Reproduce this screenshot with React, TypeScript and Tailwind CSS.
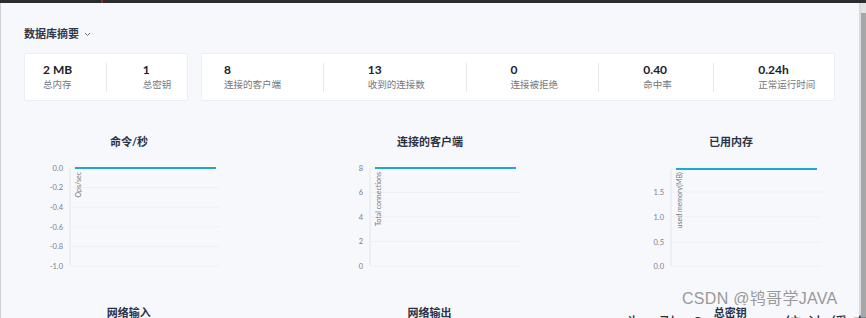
import React from "react";

const FONT = "font-['Lato','Noto_Sans_CJK_SC',sans-serif]";

type Stat = { value: string; label: string; w: string; pl: string };

const memStats: Stat[] = [
  { value: "2 MB", label: "总内存", w: "w-[82px]", pl: "pl-[18px]" },
  { value: "1", label: "总密钥", w: "w-[82px]", pl: "pl-[36px]" },
];

const connStats: Stat[] = [
  { value: "8", label: "连接的客户端", w: "w-[121px]", pl: "pl-[22px]" },
  { value: "13", label: "收到的连接数", w: "w-[143px]", pl: "pl-[44px]" },
  { value: "0", label: "连接被拒绝", w: "w-[133px]", pl: "pl-[44px]" },
  { value: "0.40", label: "命中率", w: "w-[115px]", pl: "pl-[44px]" },
  { value: "0.24h", label: "正常运行时间", w: "w-[121px]", pl: "pl-[44px]" },
];

function StatCard({ stats, width }: { stats: Stat[]; width: string }) {
  return (
    <div
      className={`${width} h-[48px] bg-white border border-[#eceef2] rounded-[2px] flex items-center`}
    >
      {stats.map((s, i) => (
        <div
          key={s.label}
          className={`${s.w} ${s.pl} h-[29px] flex flex-col justify-center ${
            i > 0 ? "border-l border-[#e6e8ec]" : ""
          }`}
        >
          <div className="text-[12px] leading-[14px] font-bold text-[#1d2129]">
            {s.value}
          </div>
          <div className="mt-[2px] text-[9.5px] leading-[12px] text-[#73777e]">
            {s.label}
          </div>
        </div>
      ))}
    </div>
  );
}

type ChartProps = {
  title: string;
  ticks: { label: string; y: number }[];
  axisX: number;
  labelRight: number;
  gridRight: number;
  lineFrom: number;
  lineTo: number;
  lineY: number;
  axisTop: number;
  yLabel: string;
  yLabelX: number;
};

function LineChart(p: ChartProps) {
  return (
    <div className="w-[210px] flex flex-col">
      <div className="h-[16px] text-center text-[11px] leading-[16px] font-bold text-[#2a3346]">
        {p.title}
      </div>
      <svg width="210" height="124" className="block">
        {p.ticks.map((t) => (
          <g key={t.label}>
            <line
              x1={p.axisX}
              x2={p.gridRight}
              y1={t.y}
              y2={t.y}
              stroke="#eef0f4"
              strokeWidth="1"
            />
            <text
              x={p.labelRight}
              y={t.y + 2.8}
              textAnchor="end"
              fontSize="7.5"
              fill="#7b7f87"
              fontFamily="Lato, sans-serif"
            >
              {t.label}
            </text>
          </g>
        ))}
        <line
          x1={p.axisX}
          x2={p.axisX}
          y1={p.axisTop}
          y2={116}
          stroke="#e4e6ea"
          strokeWidth="1"
        />
        <line
          x1={p.lineFrom}
          x2={p.lineTo}
          y1={p.lineY}
          y2={p.lineY}
          stroke="#22a6d8"
          strokeWidth="2"
        />
        <text
          transform={`translate(${p.yLabelX},22) rotate(-90)`}
          textAnchor="end"
          fontSize="7"
          fill="#73777e"
          fontFamily="Lato, sans-serif"
        >
          {p.yLabel}
        </text>
      </svg>
    </div>
  );
}

function ChartTitle({ title }: { title: string }) {
  return (
    <div className="w-[210px] h-[16px] flex justify-center relative z-10">
      <span className="px-[2px] bg-[#f7f8fc] text-[11px] leading-[16px] font-bold text-[#2a3346]">
        {title}
      </span>
    </div>
  );
}

export default function App() {
  return (
    <div className={`relative w-[866px] h-[318px] overflow-hidden bg-[#2d2d2d] ${FONT}`}>
      <div className="h-[3px] relative">
        <div className="absolute left-[101px] top-0 w-[2px] h-[3px] bg-[#8a2a2a]" />
      </div>
      <div className="flex h-[315px]">
        <div className="w-[1px] bg-[#cfd2d6]" />
        <div className="w-[858px] bg-[#f7f8fc] pl-[23px] pr-[24px] pt-[23px]">
          <div className="flex items-center h-[16px] gap-[5px]">
            <span className="text-[11px] font-bold text-[#303a4e]">数据库摘要</span>
            <svg width="7" height="5" viewBox="0 0 7 5" className="mt-[1px]">
              <path d="M1 1 L3.5 3.5 L6 1" fill="none" stroke="#6b6f76" strokeWidth="1" />
            </svg>
          </div>
          <div className="mt-[11px] flex gap-[13px]">
            <StatCard stats={memStats} width="w-[164px]" />
            <StatCard stats={connStats} width="w-[634px]" />
          </div>

          <div className="mt-[33px] flex gap-[91px]">
            <LineChart
              title="命令/秒"
              ticks={[
                { label: "0.0", y: 18 },
                { label: "-0.2", y: 37.6 },
                { label: "-0.4", y: 57.2 },
                { label: "-0.6", y: 76.8 },
                { label: "-0.8", y: 96.4 },
                { label: "-1.0", y: 116 },
              ]}
              axisX={46}
              labelRight={39}
              gridRight={196}
              lineFrom={51}
              lineTo={192}
              lineY={18}
              axisTop={18}
              yLabel="Ops/sec"
              yLabelX={57}
            />
            <LineChart
              title="连接的客户端"
              ticks={[
                { label: "8", y: 18 },
                { label: "6", y: 42.5 },
                { label: "4", y: 67 },
                { label: "2", y: 91.5 },
                { label: "0", y: 116 },
              ]}
              axisX={45}
              labelRight={38}
              gridRight={195}
              lineFrom={50}
              lineTo={191}
              lineY={18}
              axisTop={18}
              yLabel="Total connections"
              yLabelX={56}
            />
            <LineChart
              title="已用内存"
              ticks={[
                { label: "1.5", y: 42 },
                { label: "1.0", y: 67 },
                { label: "0.5", y: 92 },
                { label: "0.0", y: 116 },
              ]}
              axisX={45}
              labelRight={38}
              gridRight={196}
              lineFrom={50}
              lineTo={191}
              lineY={19}
              axisTop={19}
              yLabel="used memory(MB)"
              yLabelX={56}
            />
          </div>

          <div className="mt-[31px] flex gap-[91px]">
            <ChartTitle title="网络输入" />
            <ChartTitle title="网络输出" />
            <ChartTitle title="总密钥" />
          </div>
        </div>
        <div className="w-[2px] bg-[#d9dadc]" />
        <div className="w-[5px] bg-[#a7a7a7] flex flex-col">
          <div className="h-[10px] bg-[#e3e3e3]" />
        </div>
      </div>

      <div className="absolute left-[682px] top-[289px] text-[16px] leading-[20px] text-[#999999] font-['Liberation_Sans','Noto_Sans_CJK_SC',sans-serif] tracking-[0.3px]">
        CSDN @鸨哥学JAVA
      </div>
      <div className="absolute left-[626px] top-[313px] text-[17px] leading-[20px] text-[#2a2a2a] font-['Noto_Sans_CJK_SC',sans-serif] whitespace-nowrap tracking-[6px]">
        为 引 C · · 统计缓存
      </div>
    </div>
  );
}
